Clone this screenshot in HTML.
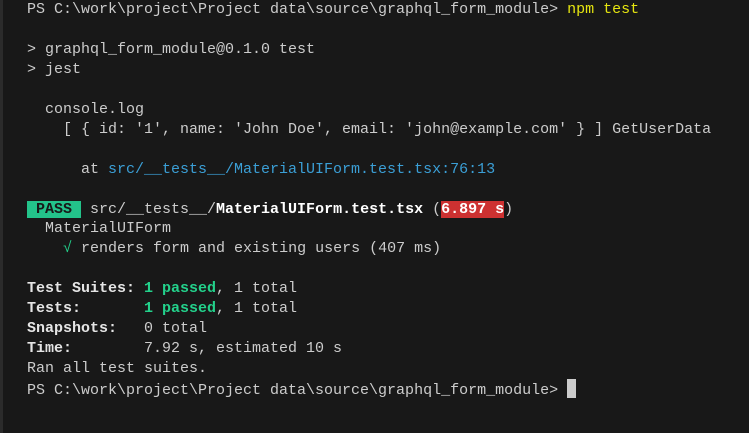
<!DOCTYPE html>
<html><head><style>
html,body{margin:0;padding:0;width:749px;height:433px;overflow:hidden;background:#181818;}
.l{position:absolute;left:0;top:0;width:3px;height:433px;background:#2b2b2b;}
pre{position:absolute;left:27px;top:0px;margin:0;font-family:"Liberation Mono",monospace;font-size:15px;line-height:19.95px;color:#cccccc;white-space:pre;}
.y{color:#e5e510}
.c{color:#3b9fd6}
.g{color:#23d18b;font-weight:bold}
.gn{color:#23d18b}
.b{color:#ffffff;font-weight:bold}
.w{font-weight:bold;color:#e5e5e5}
.pass{background:#23c38a;color:#181818;font-weight:bold}
.red{background:#cd3131;color:#fff;font-weight:bold}
.cur{display:inline-block;width:9px;height:19px;background:#cccccc;vertical-align:-4px}
</style></head><body><div class="l"></div>
<pre>PS C:\work\project\Project data\source\graphql_form_module&gt; <span class="y">npm test</span>

&gt; graphql_form_module@0.1.0 test
&gt; jest

  console.log
    [ { id: '1', name: 'John Doe', email: 'john@example.com' } ] GetUserData

      at <span class="c">src/__tests__/MaterialUIForm.test.tsx:76:13</span>

<span class="pass"> PASS </span> src/__tests__/<span class="b">MaterialUIForm.test.tsx</span> (<span class="red">6.897 s</span>)
  MaterialUIForm
    <span class="gn">√</span> renders form and existing users (407 ms)

<span class="w">Test Suites: </span><span class="g">1 passed</span>, 1 total
<span class="w">Tests:       </span><span class="g">1 passed</span>, 1 total
<span class="w">Snapshots:   </span>0 total
<span class="w">Time:        </span>7.92 s, estimated 10 s
Ran all test suites.
PS C:\work\project\Project data\source\graphql_form_module&gt; <span class="cur"></span></pre>
</body></html>
